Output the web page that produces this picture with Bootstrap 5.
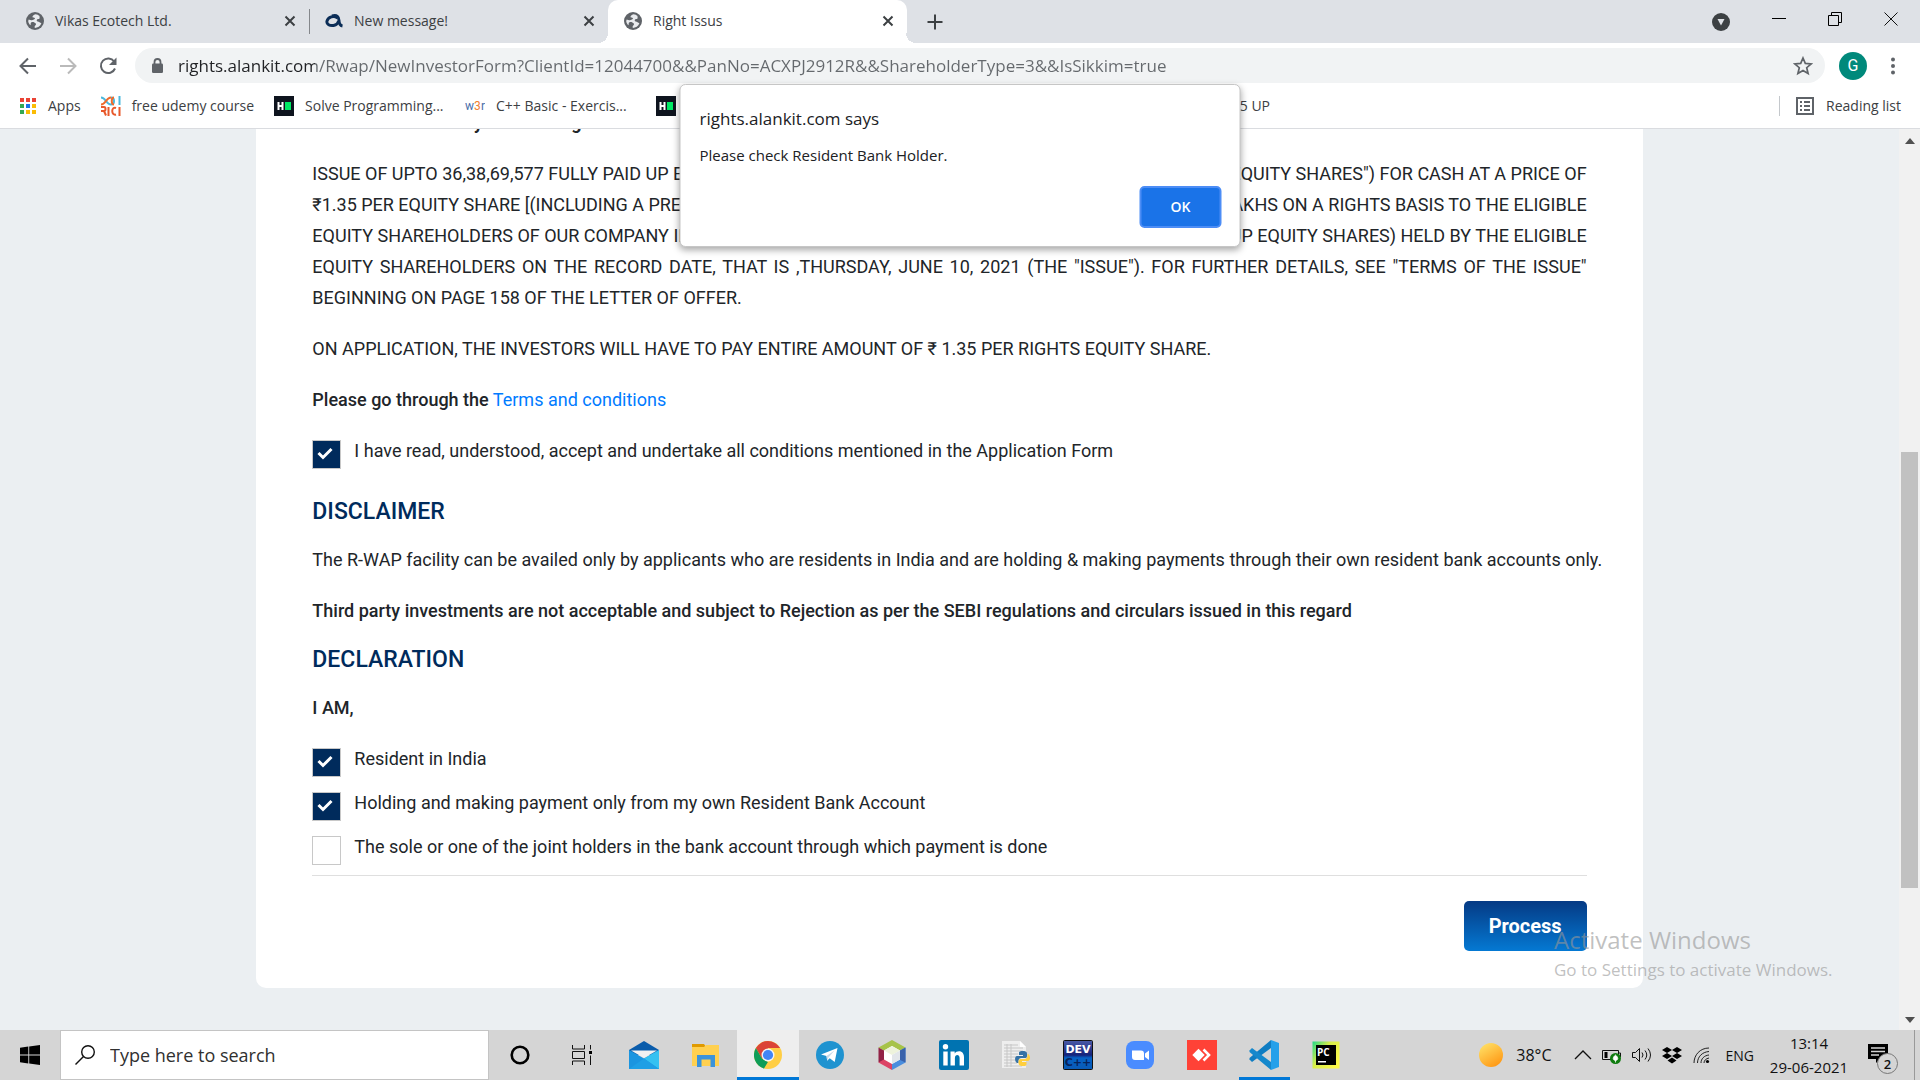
<!DOCTYPE html>
<html lang="en">
<head>
<meta charset="utf-8">
<meta name="viewport" content="width=device-width, initial-scale=1">
<title>Right Issus</title>
<link href="https://cdn.jsdelivr.net/npm/bootstrap@5.3.0/dist/css/bootstrap.min.css" rel="stylesheet">
<style>
  :root { --ui: "Open Sans", "Noto Sans", sans-serif; }
  body { font-family: var(--ui); font-size: 14px; color: #3c4043; background: #ebeff2; }
  svg { display: block; flex: none; }
  .plain { border: 0; background: none; padding: 0; color: inherit; display: flex; align-items: center; justify-content: center; flex: none; }
  .plain-link { color: inherit; text-decoration: none; }

  /* browser chrome */
  .tabstrip { background: #dee1e6; height: 43px; padding-left: 10px; }
  .tab-item { width: 299px; height: 43px; padding: 0 12px 2px 16px; gap: 11px; line-height: 20px; border-right: 1px solid transparent; }
  .tab-sep { position: relative; }
  .tab-sep::after { content: ""; position: absolute; right: -2px; top: 9px; height: 25px; width: 1px; background: #84878b; }
  .tab-active { background: #fff; border-radius: 10px 10px 0 0; position: relative; }
  .tab-active::before, .tab-active::after { content: ""; position: absolute; bottom: 0; width: 10px; height: 10px; }
  .tab-active::before { left: -10px; background: radial-gradient(circle at 0 0, #dee1e6 10px, #fff 10px); }
  .tab-active::after { right: -10px; background: radial-gradient(circle at 100% 0, #dee1e6 10px, #fff 10px); }
  .win-controls { gap: 42px; padding: 0 22px 6px 0; }
  .toolbar { height: 45px; padding: 0 25px 0 18px; }
  .nav-buttons { gap: 20px; width: 117px; }
  .omnibox { background: #f1f3f4; height: 35px; border-radius: 18px; padding: 0 12px 0 16px; gap: 14px; }
  .url-field { flex: 1; border: 0; outline: 0; padding: 0; height: 35px; font-size: 17px; color: #5f6368;
    background: linear-gradient(90deg, #202124 137px, #65696d 137px); -webkit-background-clip: text; background-clip: text; -webkit-text-fill-color: transparent; }
  .avatar { width: 28px; height: 28px; margin-left: 14px; background: #00897b; color: #fff; font: 16px Roboto, sans-serif; }
  .bookmarks { height: 41px; border-bottom: 1px solid #dadce0; padding: 0 19px 5px 19px; gap: 20px; line-height: 20px; }
  .bookmarks a { gap: 11px; white-space: nowrap; }
  .bm-long { width: 171px; }
  .bm-last { width: 574px; text-align: right; }
  .rule-v { width: 1px; height: 20px; background: #c4c8cc; }

  /* page */
  .viewport-area { background: #ebeff2; }
  .issue-card { width: 73%; margin: -22px auto 42px; padding: 0 56px 37px; background: #fff; border-radius: 0 0 10px 10px;
    font: 18px/31px Roboto, sans-serif; color: #212529; }
  .issue-card p { margin-bottom: 20px; white-space: nowrap; }
  .issue-card b, .iam { font-weight: 500; }
  .offer { margin-bottom: 20px; }
  .offer-line { text-align: justify; text-align-last: justify; }
  .issue-card h2 { font-size: 23px; line-height: 27px; font-weight: 500; color: #002b5c; margin: 0 0 19px; }
  .terms { color: #007bff; text-decoration: none; }
  .tick { display: flex; padding: 0; margin: 0 0 10px; gap: 13px; min-height: 34px; }
  .tick-accept { margin-bottom: 29px; }
  .tick .form-check-input { float: none; flex: none; width: 29px; height: 29px; margin: 5px 0 0; border: 1px solid #c8c8c8; border-radius: 0; background-color: #fff; box-shadow: none; }
  .tick .form-check-input:checked { background-color: #002b5c; background-size: 26px 26px;
    background-image: url("data:image/svg+xml,%3Csvg xmlns='http://www.w3.org/2000/svg' viewBox='0 0 26 26'%3E%3Cpath d='M4.500 11l4.500 4.500L17.500 7' fill='none' stroke='%23fff' stroke-width='3'/%3E%3C/svg%3E"); }
  .divider { height: 1px; background: #dfdfdf; margin-bottom: 25px; }
  .btn-process { width: 123px; height: 50px; padding: 0; border: 0; border-radius: 5px; color: #fff; font-size: 20px; font-weight: 700; background: linear-gradient(#053a84, #0579d3); }
  .btn-process:hover { color: #fff; }
  .scroll-track { width: 21px; background: #f1f1f1; padding: 9px 2px 7px; }
  .scroll-before { flex: 308; } .scroll-thumb { flex: 437; width: 17px; background: #c1c1c1; } .scroll-after { flex: 129; }

  /* alert over the page */
  .alert-box { position: absolute; z-index: 5; top: 84px; left: 50%; transform: translateX(-50%); width: 561px; padding: 22px 18px 18px 19px; background: #fff; border: 1px solid #c6c6c6; border-radius: 6px; box-shadow: 0 3px 7px rgba(0,0,0,.35); color: #202124; }
  .alert-box h1 { font-size: 17px; line-height: 24px; margin: 0 0 14px; font-weight: 400; }
  .alert-box p { font-size: 15px; line-height: 20px; margin: 0 0 21px; }
  .btn-ok { width: 82px; height: 42px; background: #1a73e8; color: #fff; border: 2px solid #4c8df6; border-radius: 5px; font-size: 14px; line-height: 20px; font-weight: 600; padding: 0; }
  .watermark { position: absolute; z-index: 4; left: 1554px; top: 923px; color: rgba(150,150,150,.6); pointer-events: none; }
  .watermark div { font-size: 24px; line-height: 34px; }
  .watermark p { font-size: 17px; line-height: 26px; margin: 0; }

  /* taskbar */
  .taskbar { height: 50px; background: #d5d5d5; color: #111; }
  .start { width: 60px; }
  .search-box { width: 429px; height: 50px; background: #fff; border: 1px solid #c4c4c4; padding: 0 14px; gap: 15px; }
  .search-box input { flex: 1; min-width: 0; border: 0; outline: 0; font-size: 18px; padding: 0; }
  .search-box input::placeholder { color: #303030; opacity: 1; }
  .app { width: 62px; height: 50px; }
  .app-active { background: #eee; box-shadow: inset 0 -3px #0078d7; }
  .app-open { background: linear-gradient(#0078d7, #0078d7) center bottom / 51px 3px no-repeat; }
  .tray { gap: 10px; padding-right: 15px; }
  .temp { font-size: 16px; margin: 0 12px 0 3px; }
  .clock { width: 84px; line-height: 24px; font-size: 15px; white-space: nowrap; display: flex; flex-direction: column; align-items: center; margin: 0 2px 0 3px; }
  .show-desktop { border-left: 1px solid #999; width: 6px; height: 50px; }
</style>
<script src="https://cdn.jsdelivr.net/npm/bootstrap@5.3.0/dist/js/bootstrap.bundle.min.js"></script>
</head>
<body class="vh-100 d-flex flex-column overflow-hidden position-relative">
<svg width="0" height="0" class="position-absolute" aria-hidden="true">
  <symbol id="globe" viewBox="0 0 18 18"><circle cx="9" cy="9" r="9" fill="#5f6368"/><path d="M9.500 2.200c-1.800.5-3.200 1.600-3 2.800.2 1 1.900.3 2.400 1.300.4 1-1.300 1.300-2.300 1.700-1.500.6-2.300 0-3.900-.4L2.200 9c.1 1.600 1 3.200 2.300 4.300C5 12 4.200 11 5.500 10.300c1.600-.7 3.200.2 4.300 1.300.8.900-.4 1.800-1 2.500-.4.6-.2 1.200.1 1.800 2.500 0 5.500-1.700 6.500-4.600-1-.2-1.900-1-2.800-1.500-1.200-.5-2.200-.8-1.800-1.900.5-1 2-.4 2.700-1.300.6-.8-.4-1.400.1-2.500C12.600 3 11 2.200 9.500 2.200z" fill="#e9ebee"/></symbol>
  <symbol id="close" viewBox="0 0 12 12"><path d="M1.500 1.500l9 9M10.500 1.500l-9 9" stroke="#3c4043" stroke-width="2"/></symbol>
  <symbol id="hr" viewBox="0 0 20 20"><path fill="#0e141e" d="M0 0h20v20H0z"/><path d="M3.500 6h2v3h2V6h2v8h-2v-3h-2v3h-2z" fill="#fff"/><path fill="#00ea64" d="M11 6h6v8h-6z"/></symbol>
</svg>

<header class="bg-white flex-shrink-0">
  <div class="tabstrip d-flex align-items-center">
    <div class="tab-item tab-sep d-flex align-items-center">
      <svg width="18" height="18"><use href="#globe"/></svg><span class="flex-grow-1">Vikas Ecotech Ltd.</span>
      <button class="plain" aria-label="Close tab"><svg width="12" height="12"><use href="#close"/></svg></button>
    </div>
    <div class="tab-item d-flex align-items-center">
      <svg width="18" height="18" viewBox="0 0 18 18"><path d="M12.500 6C9 3 3 5 2 9c-.8 3.500 3 5 6.500 4.500C11 13 13 11.500 13.500 9" fill="none" stroke="#0b2d57" stroke-width="3"/><path d="M7 4c5-1.500 7 1 7 4.500 0 3 .7 5 3.500 5.500" fill="none" stroke="#0b2d57" stroke-width="3"/></svg><span class="flex-grow-1">New message!</span>
      <button class="plain" aria-label="Close tab"><svg width="12" height="12"><use href="#close"/></svg></button>
    </div>
    <div class="tab-item tab-active d-flex align-items-center">
      <svg width="18" height="18"><use href="#globe"/></svg><span class="flex-grow-1">Right Issus</span>
      <button class="plain" aria-label="Close tab"><svg width="12" height="12"><use href="#close"/></svg></button>
    </div>
    <button class="plain ms-3 ps-1" aria-label="New tab"><svg width="16" height="16" viewBox="0 0 16 16"><path d="M8 .5v15M.5 8h15" stroke="#3c4043" stroke-width="2"/></svg></button>
    <div class="win-controls d-flex align-items-center ms-auto">
      <svg width="18" height="24" viewBox="0 0 18 24"><circle cx="9" cy="15" r="9" fill="#3c4043"/><path d="M5.500 12h7L9 18.500z" fill="#dee1e6"/></svg>
      <button class="plain" aria-label="Minimize"><svg width="14" height="14" viewBox="0 0 14 14"><path d="M0 6.500h14" stroke="#000"/></svg></button>
      <button class="plain" aria-label="Restore"><svg width="14" height="14" viewBox="0 0 14 14"><path d="M.5 3.500h10v10H.5zM3.500 3.500v-3h10v10h-3" fill="none" stroke="#000"/></svg></button>
      <button class="plain" aria-label="Close"><svg width="14" height="14" viewBox="0 0 14 14"><path d="M.5.5l13 13M13.500.5l-13 13" stroke="#111"/></svg></button>
    </div>
  </div>
  <div class="toolbar d-flex align-items-center">
    <div class="nav-buttons d-flex">
      <button class="plain" aria-label="Back"><svg width="20" height="20" viewBox="0 0 20 20"><path d="M18 10H3M10 2.500L2.500 10l7.500 7.500" fill="none" stroke="#5f6368" stroke-width="2"/></svg></button>
      <button class="plain" aria-label="Forward"><svg width="20" height="20" viewBox="0 0 20 20"><path d="M2 10h15M10 2.500l7.500 7.500-7.500 7.500" fill="none" stroke="#bababa" stroke-width="2"/></svg></button>
      <button class="plain" aria-label="Reload"><svg width="20" height="20" viewBox="0 0 20 20"><path d="M16.200 5.500A7.300 7.300 0 1 0 17 12.500" fill="none" stroke="#5f6368" stroke-width="2"/><path d="M18.500 1.500V9H11z" fill="#5f6368"/></svg></button>
    </div>
    <div class="omnibox d-flex align-items-center flex-grow-1">
      <svg width="13" height="16" viewBox="0 0 13 16"><path d="M3.500 7V4a3 3 0 0 1 6 0v3" fill="none" stroke="#5f6368" stroke-width="1.800"/><rect x="1" y="5.500" width="11" height="9.500" rx="1.200" fill="#5f6368"/></svg>
      <input class="url-field" type="text" aria-label="Address" value="rights.alankit.com/Rwap/NewInvestorForm?ClientId=12044700&amp;&amp;PanNo=ACXPJ2912R&amp;&amp;ShareholderType=3&amp;&amp;IsSikkim=true">
      <button class="plain" aria-label="Bookmark this page"><svg width="20" height="20" viewBox="0 0 20 20"><path d="M10 2l2.300 5.400 5.900.5-4.500 3.800 1.400 5.800L10 14.400l-5.100 3.100 1.400-5.800L1.800 7.900l5.900-.5z" fill="none" stroke="#5f6368" stroke-width="1.700"/></svg></button>
    </div>
    <button class="plain avatar rounded-circle" aria-label="Profile">G</button>
    <button class="plain ms-4" aria-label="Menu"><svg width="4" height="18" viewBox="0 0 4 18"><g fill="#5f6368"><circle cx="2" cy="2.500" r="2"/><circle cx="2" cy="9" r="2"/><circle cx="2" cy="15.500" r="2"/></g></svg></button>
  </div>
  <nav class="bookmarks d-flex align-items-center">
    <a class="plain-link d-flex align-items-center" href="#"><svg width="18" height="18" viewBox="0 0 18 18"><path fill="#ea4335" d="M1 1h4v4H1zM7 1h4v4H7zM13 1h4v4h-4z"/><path fill="#34a853" d="M1 7h4v4H1zM1 13h4v4H1z"/><path fill="#1a73e8" d="M7 7h4v4H7z"/><path fill="#fbbc04" d="M13 7h4v4h-4zM13 13h4v4h-4zM7 13h4v4H7z"/></svg>Apps</a>
    <a class="plain-link d-flex align-items-center" href="#"><svg width="20" height="20" viewBox="0 0 20 20"><g fill="none" stroke-width="2"><path d="M0 1.500c5 0 5 7 10 7 4 0 4-7 0-7" stroke="#4bb8dc"/><path d="M0 8.500c5 0 5-7 10-7M13 1.500c-3 0-3 7 0 7" stroke="#ee6a2c"/><path d="M18.500 0v9" stroke="#4bb8dc"/><path d="M0 11h3c2 0 2 4 0 4H0M3 15l2 4.500M7.500 11v9M15 12c-5-2-5 8 0 6.500M18.500 11v9" stroke="#e8592b"/></g></svg>free udemy course</a>
    <a class="plain-link bm-long d-flex align-items-center" href="#"><svg width="20" height="20"><use href="#hr"/></svg>Solve Programming...</a>
    <a class="plain-link bm-long d-flex align-items-center" href="#"><svg width="20" height="20" viewBox="0 0 20 20"><g font-family="Roboto, sans-serif" font-size="12"><text x="0" y="14" fill="#4a6ea9">w</text><text x="9" y="14" fill="#f08030">3</text><text x="16" y="14" fill="#4a6ea9">r</text></g></svg>C++ Basic - Exercis...</a>
    <a class="plain-link d-flex align-items-center" href="#" aria-label="HackerRank"><svg width="20" height="20"><use href="#hr"/></svg></a>
    <a class="plain-link bm-last" href="#">5 UP</a>
    <div class="d-flex align-items-center ms-auto">
      <span class="rule-v me-3"></span>
      <button class="plain"><svg class="me-2" width="18" height="18" viewBox="0 0 18 18"><path d="M1 1h16v16H1z" fill="none" stroke="#5f6368" stroke-width="2"/><path d="M4 5h2M8 5h6M4 9h2M8 9h6M4 13h2M8 13h6" stroke="#5f6368" stroke-width="2"/></svg><span class="ps-1">Reading list</span></button>
    </div>
  </nav>
</header>

<div class="viewport-area d-flex flex-grow-1 overflow-hidden">
  <main class="flex-grow-1">
    <form class="issue-card">
      <p><b class="fw-bold">Draft Issue Summary for Offering</b></p>
      <div class="offer">
        <div class="d-flex justify-content-between"><span>ISSUE OF UPTO 36,38,69,577 FULLY PAID UP EQ</span><span>EQUITY SHARES") FOR CASH AT A PRICE OF</span></div>
        <div class="d-flex justify-content-between"><span>₹1.35 PER EQUITY SHARE [(INCLUDING A PREM</span><span>LAKHS ON A RIGHTS BASIS TO THE ELIGIBLE</span></div>
        <div class="d-flex justify-content-between"><span>EQUITY SHAREHOLDERS OF OUR COMPANY IN</span><span>UP EQUITY SHARES) HELD BY THE ELIGIBLE</span></div>
        <div class="offer-line">EQUITY SHAREHOLDERS ON THE RECORD DATE, THAT IS ,THURSDAY, JUNE 10, 2021 (THE "ISSUE"). FOR FURTHER DETAILS, SEE "TERMS OF THE ISSUE"</div>
        <div>BEGINNING ON PAGE 158 OF THE LETTER OF OFFER.</div>
      </div>
      <p>ON APPLICATION, THE INVESTORS WILL HAVE TO PAY ENTIRE AMOUNT OF ₹ 1.35 PER RIGHTS EQUITY SHARE.</p>
      <p><b>Please go through the</b> <a class="terms" href="#">Terms and conditions</a></p>
      <div class="tick tick-accept form-check"><input class="form-check-input" type="checkbox" id="t1" checked><label for="t1">I have read, understood, accept and undertake all conditions mentioned in the Application Form</label></div>
      <h2>DISCLAIMER</h2>
      <p>The R-WAP facility can be availed only by applicants who are residents in India and are holding &amp; making payments through their own resident bank accounts only.</p>
      <p><b>Third party investments are not acceptable and subject to Rejection as per the SEBI regulations and circulars issued in this regard</b></p>
      <h2>DECLARATION</h2>
      <p class="iam">I AM,</p>
      <div class="tick form-check"><input class="form-check-input" type="checkbox" id="t2" checked><label for="t2">Resident in India</label></div>
      <div class="tick form-check"><input class="form-check-input" type="checkbox" id="t3" checked><label for="t3">Holding and making payment only from my own Resident Bank Account</label></div>
      <div class="tick form-check"><input class="form-check-input" type="checkbox" id="t4"><label for="t4">The sole or one of the joint holders in the bank account through which payment is done</label></div>
      <div class="divider"></div>
      <div class="d-flex justify-content-end"><button type="button" class="btn btn-process">Process</button></div>
    </form>
  </main>
  <div class="scroll-track d-flex flex-column align-items-center" aria-hidden="true">
    <svg width="10" height="6" viewBox="0 0 10 6"><path d="M0 6l5-6 5 6z" fill="#505050"/></svg>
    <div class="scroll-before"></div><div class="scroll-thumb"></div><div class="scroll-after"></div>
    <svg width="10" height="6" viewBox="0 0 10 6"><path d="M0 0l5 6 5-6z" fill="#505050"/></svg>
  </div>
</div>

<footer class="taskbar d-flex align-items-center flex-shrink-0">
  <button class="plain start" aria-label="Start"><svg width="20" height="20" viewBox="0 0 20 20"><path d="M0 2.800l8.300-1.200v8H0zM9.200 1.500L20 0v9.600H9.200zM0 10.500h8.300v8L0 17.200zM9.200 10.500H20V20L9.200 18.600z"/></svg></button>
  <div class="search-box d-flex align-items-center">
    <svg width="20" height="20" viewBox="0 0 20 20"><circle cx="13" cy="7" r="6.300" fill="none" stroke="#111" stroke-width="1.400"/><path d="M8.500 11.500L.5 19.500" stroke="#111" stroke-width="1.400"/></svg>
    <input type="text" aria-label="Search" placeholder="Type here to search">
  </div>
  <button class="plain app" aria-label="Cortana"><svg width="20" height="20" viewBox="0 0 20 20"><circle cx="10" cy="10" r="8.300" fill="none" stroke="#000" stroke-width="2.600"/></svg></button>
  <button class="plain app" aria-label="Task view"><svg width="20" height="20" viewBox="0 0 20 20"><path d="M.5 0v4h12V0M.5 20v-4h12v4M.5 6.500h12v7H.5zM18.500 0v4.500M18.500 10.500V20" fill="none" stroke="#111"/><path d="M17 6h3v3h-3z"/></svg></button>
  <button class="plain app" aria-label="Mail"><svg width="30" height="28" viewBox="0 0 30 28"><path d="M0 9L15 0l15 9v5H0z" fill="#0a5cab"/><path d="M0 9l15 8.500L30 9v19H0z" fill="#1b95e0"/><path d="M15 17.500L30 9v19z" fill="#35c1f1"/><path d="M2 9.500h26L15 17z" fill="#f2f2f2"/><path d="M0 28l15-10.500L30 28z" fill="#1f9fe5"/></svg></button>
  <button class="plain app" aria-label="File Explorer"><svg width="28" height="24" viewBox="0 0 28 24"><path d="M0 1h12l2 3H0z" fill="#e09a00"/><path d="M0 4h12l2-2h13v21H0z" fill="#ffd050"/><path d="M5 24V12h18v12h-4.500v-7.500h-9V24z" fill="#3b93da"/></svg></button>
  <button class="plain app app-active" aria-label="Google Chrome"><svg width="28" height="28" viewBox="0 0 28 28"><circle cx="14" cy="14" r="14" fill="#ffce44"/><path d="M14 14L7.900 17.500 1.880 7A14 14 0 0 1 26.120 7H14z" fill="#db4437"/><path d="M1.880 7l6.060 10.500 6 3.500L10 27.500A14 14 0 0 1 1.880 7z" fill="#0f9d58"/><circle cx="14" cy="14" r="6.500" fill="#f5f5f5"/><circle cx="14" cy="14" r="5.100" fill="#4285f4"/></svg></button>
  <button class="plain app" aria-label="Telegram"><svg width="28" height="28" viewBox="0 0 28 28"><circle cx="14" cy="14" r="14" fill="#1f93d0"/><path d="M5 13.500L21.500 7l-2.800 14-5-3.700-2.500 2.400-.7-4.700z" fill="#fff"/><path d="M10.500 15l8-5.500-6 7-1.300 3.200z" fill="#c8daea"/></svg></button>
  <button class="plain app" aria-label="NetBeans"><svg width="28" height="30" viewBox="0 0 28 30"><path d="M14 0l13.500 7.500L14 15 .5 7.500z" fill="#a7c34a"/><path d="M.5 7.500L14 15v4L.5 22.500z" fill="#922246"/><path d="M.5 22.500L14 15v15z" fill="#dc4365"/><path d="M27.500 7.500L14 15v15l13.500-7.500z" fill="#4b8ede"/><path d="M27.500 7.500l-5.500 3v9.500l5.500 2.500z" fill="#3a62ab"/><path d="M14 6l8 4.500v9L14 24l-8-4.500v-9z" fill="#fff"/><path d="M14 6l8 4.500-8 4.500-8-4.500z" fill="#eef3dc"/><path d="M22 10.500v9L14 24v-9z" fill="#e2e6ea"/></svg></button>
  <button class="plain app" aria-label="LinkedIn"><svg width="30" height="30" viewBox="0 0 30 30"><rect width="30" height="30" rx="2" fill="#0073b1"/><circle cx="6.500" cy="6.800" r="2.700" fill="#fff"/><path d="M4.300 11.500h4.400v14H4.300zM11.500 11.500h4.200v2c2-3.500 9.300-3.500 9.300 3.500v8.500h-4.400V18c0-4-4.700-4-4.700 0v7.500h-4.400z" fill="#fff"/></svg></button>
  <button class="plain app" aria-label="Python"><svg width="28" height="30" viewBox="0 0 28 30"><path d="M0 1h18l6 6v21H0z" fill="#eee"/><path d="M2 5h14M2 8h19M2 11h19M2 14h14M2 17h12M2 20h12M2 23h13M2 26h18M5 4v23M9 4v23" stroke="#c6c6c6"/><path d="M18 1v6h6z" fill="#fff"/><path d="M20.500 11c-4 0-3.500 1.500-3.500 4h4v1h-6c-3 0-2.500 8 1.500 7v-2c0-2 1-3 3-3h4c2 0 1.500-3 1.500-4.500 0-2-2-2.500-4.500-2.500z" fill="#3572a5"/><path d="M21 26c4 0 3.500-1.500 3.500-4H20v-1h6c3 0 2.500-7-.5-7v2c0 2-1.500 3-3 3h-4c-2 0-2 2-2 4 0 2.500 2 3 4.500 3z" fill="#ffcf3f"/></svg></button>
  <button class="plain app" aria-label="Dev-C++"><svg width="30" height="30" viewBox="0 0 30 30"><defs><linearGradient id="dv" x2="0" y2="1"><stop stop-color="#4a5ba8"/><stop offset=".5" stop-color="#16237a"/><stop offset=".6" stop-color="#0562c6"/><stop offset="1" stop-color="#0a5ab5"/></linearGradient></defs><rect x=".5" y=".5" width="29" height="29" rx="1" fill="url(#dv)" stroke="#111"/><text x="15" y="13" text-anchor="middle" font-family="DejaVu Sans, sans-serif" font-size="11" font-weight="700" fill="#fff">DEV</text><text x="15" y="26" text-anchor="middle" font-family="DejaVu Sans, sans-serif" font-size="11" font-weight="700" fill="#07235c">C++</text></svg></button>
  <button class="plain app" aria-label="Zoom"><svg width="28" height="28" viewBox="0 0 28 28"><rect width="28" height="28" rx="8" fill="#4a8cff"/><path d="M6 9.500h9a3 3 0 0 1 3 3v6.500H9a3 3 0 0 1-3-3zM19 12.500l4-3v9.500l-4-3z" fill="#fff"/></svg></button>
  <button class="plain app" aria-label="AnyDesk"><svg width="30" height="30" viewBox="0 0 30 30"><path fill="#ff4237" d="M0 0h30v30H0z"/><path d="M11.500 8.800l6.200 6.200-6.200 6.200L5.300 15z" fill="#fff"/><path d="M16.500 9.500l5.500 5.500-5.500 5.500" fill="none" stroke="#fff" stroke-width="2.600"/></svg></button>
  <button class="plain app app-open" aria-label="Visual Studio Code"><svg width="30" height="30" viewBox="0 0 30 30"><path d="M22 0v8L3 22l-2.500-2.500V18L22 0z" fill="#0f7dc2"/><path d="M22 30v-8L3 8 .5 10.500V12L22 30z" fill="#1588cc"/><path d="M22 0l8 3v24l-8 3z" fill="#24a0ea"/></svg></button>
  <button class="plain app" aria-label="PyCharm"><svg width="28" height="28" viewBox="0 0 28 28"><defs><linearGradient id="pc" x2="1" y2=".7"><stop stop-color="#21d789"/><stop offset=".45" stop-color="#d6ee4a"/><stop offset="1" stop-color="#fcf84a"/></linearGradient></defs><path fill="url(#pc)" d="M.5.5h27v27H.5z"/><path d="M4 4h20v20H4z"/><text x="5" y="15" font-family="Open Sans, sans-serif" font-size="10" font-weight="700" fill="#fff">PC</text><path d="M6 20h8v1.500H6z" fill="#fff"/></svg></button>

  <div class="tray d-flex align-items-center ms-auto">
    <svg width="24" height="24" viewBox="0 0 24 24"><defs><linearGradient id="sn" x1=".2" x2=".8" y2="1"><stop stop-color="#ffe066"/><stop offset="1" stop-color="#ff9410"/></linearGradient></defs><circle cx="12" cy="12" r="12" fill="url(#sn)"/></svg>
    <span class="temp">38°C</span>
    <svg width="18" height="18" viewBox="0 0 18 18"><path d="M1 13l8-8 8 8" fill="none" stroke="#111" stroke-width="1.300"/></svg>
    <svg width="20" height="18" viewBox="0 0 20 18"><path d="M.5 4.500h16v9H.5zM17 7h1.500v4H17" fill="none" stroke="#111"/><path d="M2.500 6h3v6h-3z"/><circle cx="13.500" cy="12.500" r="5.500" fill="#107c10"/><path d="M13.500 9c-3 2.500-3 5 0 5.500 3-.5 3-3 0-5.500zM13.500 14v2.500" stroke="#fff" fill="#fff" stroke-width=".8"/></svg>
    <svg width="20" height="18" viewBox="0 0 20 18"><path d="M.5 6.500h3l4-4v13l-4-4h-3zM10 6.500q2 2.500 0 5M13 4.500q3.500 4.500 0 9M16 2.500q5 6.500 0 13" fill="none" stroke="#111"/></svg>
    <svg width="20" height="18" viewBox="0 0 20 18"><path d="M5 1l5 3-5 3-5-3zM15 1l5 3-5 3-5-3zM5 7l5 3-5 3-5-3zM15 7l5 3-5 3-5-3zM10 11.500l4.500 3L10 17.500l-4.500-3z"/></svg>
    <svg width="20" height="18" viewBox="0 0 20 18"><g fill="none" stroke="#222"><path d="M2 17C2 9 8 2 17 2"/><path d="M5.500 17C5.500 11 10 6 17 5.500"/><path d="M9 17c0-4 3-7.500 8-8"/><path d="M12 17c0-2.500 2-4.500 5-5"/></g><circle cx="15.500" cy="15.500" r="1.600"/></svg>
    <span class="ps-1">ENG</span>
    <div class="clock"><span>13:14</span><span>29-06-2021</span></div>
    <button class="plain ms-1" aria-label="Notifications"><svg width="32" height="38" viewBox="0 -6 32 38"><path d="M1 2h20v15h-8l-4 4v-4H1z"/><path d="M4 6h14M4 9.500h14M4 13h8" stroke="#d5d5d5" stroke-width="1.300"/><circle cx="20.500" cy="21.500" r="10" fill="#d5d5d5" stroke="#777"/><text x="20.500" y="26.500" text-anchor="middle" font-family="Open Sans, sans-serif" font-size="13" font-weight="600" fill="#111">2</text></svg></button>
  </div>
  <div class="show-desktop"></div>
</footer>

<div class="alert-box" role="alertdialog" aria-labelledby="at" aria-describedby="ad">
  <h1 id="at">rights.alankit.com says</h1>
  <p id="ad">Please check Resident Bank Holder.</p>
  <div class="d-flex justify-content-end"><button class="btn btn-ok">OK</button></div>
</div>
<div class="watermark"><div>Activate Windows</div><p>Go to Settings to activate Windows.</p></div>
</body>
</html>
